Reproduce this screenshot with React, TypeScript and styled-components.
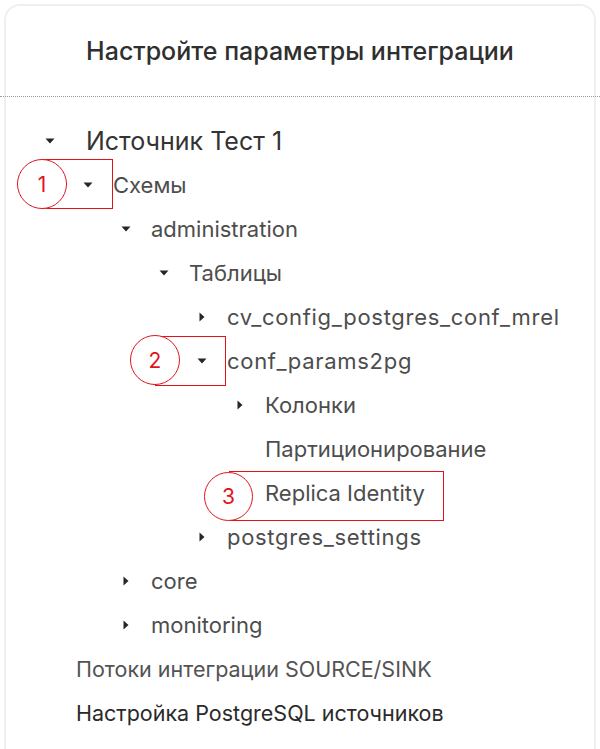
import styled, { createGlobalStyle } from 'styled-components';

const GlobalStyle = createGlobalStyle`
  html, body {
    margin: 0;
    padding: 0;
    background: #ffffff;
    font-family: Inter, 'Noto Sans', sans-serif;
    overflow: hidden;
  }
`;

const Card = styled.section`
  margin: 4px;
  min-height: 900px;
  border: 2px solid #efefef;
  border-bottom: none;
  border-radius: 16px 16px 0 0;
  background: #fff;
`;

const Header = styled.h2`
  display: flex;
  align-items: center;
  justify-content: center;
  height: 90px;
  margin: 0 -6px;
  border-bottom: 1px dotted #9a9a9a;
  font-size: 25px;
  font-weight: 500;
  color: #2f2f2f;
`;

const Tree = styled.ul`
  list-style: none;
  margin: 0;
  padding: 22px 0 0;
`;

const Row = styled.li<{ $indent: number }>`
  position: relative;
  display: flex;
  align-items: center;
  height: 44px;
  padding-left: ${(p) => p.$indent}px;
`;

const CaretBox = styled.span<{ $gap: number }>`
  display: flex;
  align-items: center;
  justify-content: center;
  width: 20px;
  height: 20px;
  margin-right: ${(p) => p.$gap}px;
  flex-shrink: 0;
`;

const Label = styled.span<{ $root?: boolean; $wide?: boolean }>`
  font-size: ${(p) => (p.$root ? 25 : 22)}px;
  color: ${(p) => (p.$root ? '#333' : '#4d4d4d')};
  letter-spacing: ${(p) => (p.$wide ? 0.7 : 0)}px;
  white-space: nowrap;
`;

const Footer = styled.li<{ $dark?: boolean }>`
  display: flex;
  align-items: center;
  height: 44px;
  padding-left: 70px;
  font-size: 21.5px;
  color: ${(p) => (p.$dark ? '#2a2a2a' : '#535353')};
  white-space: nowrap;
`;

const MarkBox = styled.span`
  position: absolute;
  border: 1px solid #e0141b;
  box-sizing: border-box;
`;

const MarkCircle = styled.span`
  position: absolute;
  display: flex;
  align-items: center;
  justify-content: center;
  border: 1px solid #e0141b;
  border-radius: 50%;
  background: #fff;
  box-sizing: border-box;
  color: #e0141b;
  font-size: 21px;
  font-family: Inter, sans-serif;
`;

type Mark = {
  num: number;
  box: [number, number, number, number];
  circle: [number, number, number];
};

type Node = {
  label: string;
  level: number;
  caret?: 'down' | 'right';
  mark?: Mark;
};

const nodes: Node[] = [
  { label: 'Источник Тест 1', level: 0, caret: 'down' },
  {
    label: 'Схемы',
    level: 1,
    caret: 'down',
    mark: { num: 1, box: [36, -4, 71, 50], circle: [11, -4, 50] },
  },
  { label: 'administration', level: 2, caret: 'down' },
  { label: 'Таблицы', level: 3, caret: 'down' },
  { label: 'cv_config_postgres_conf_mrel', level: 4, caret: 'right' },
  {
    label: 'conf_params2pg',
    level: 4,
    caret: 'down',
    mark: { num: 2, box: [149, -3, 71, 50], circle: [124, -4, 50] },
  },
  { label: 'Колонки', level: 5, caret: 'right' },
  { label: 'Партиционирование', level: 5 },
  {
    label: 'Replica Identity',
    level: 5,
    mark: { num: 3, box: [223, 0, 215, 50], circle: [198, 1, 49] },
  },
  { label: 'postgres_settings', level: 4, caret: 'right' },
  { label: 'core', level: 2, caret: 'right' },
  { label: 'monitoring', level: 2, caret: 'right' },
];

const Caret = ({ dir }: { dir: 'down' | 'right' }) => (
  <svg width="12" height="12" viewBox="0 0 12 12">
    {dir === 'down' ? (
      <path d="M1.5 3.5 L10.5 3.5 L6 8.5 Z" fill="#262626" />
    ) : (
      <path d="M3.5 1.5 L8.5 6 L3.5 10.5 Z" fill="#262626" />
    )}
  </svg>
);

const indentFor = (level: number) => (level === 0 ? 34 : 72 + 38 * (level - 1));

const App = () => {
  return (
    <>
      <GlobalStyle />
      <Card>
        <Header>Настройте параметры интеграции</Header>
        <Tree>
          {nodes.map((n) => (
            <Row key={n.label} $indent={indentFor(n.level)}>
              {n.mark && (
                <>
                  <MarkBox
                    style={{
                      left: n.mark.box[0],
                      top: n.mark.box[1],
                      width: n.mark.box[2],
                      height: n.mark.box[3],
                    }}
                  />
                  <MarkCircle
                    style={{
                      left: n.mark.circle[0],
                      top: n.mark.circle[1],
                      width: n.mark.circle[2],
                      height: n.mark.circle[2],
                    }}
                  >
                    {n.mark.num}
                  </MarkCircle>
                </>
              )}
              <CaretBox $gap={n.level === 0 ? 26 : 15}>
                {n.caret && <Caret dir={n.caret} />}
              </CaretBox>
              <Label $root={n.level === 0} $wide={n.label.includes('_')}>
                {n.label}
              </Label>
            </Row>
          ))}
          <Footer>Потоки интеграции SOURCE/SINK</Footer>
          <Footer $dark>Настройка PostgreSQL источников</Footer>
        </Tree>
      </Card>
    </>
  );
};

export default App;
